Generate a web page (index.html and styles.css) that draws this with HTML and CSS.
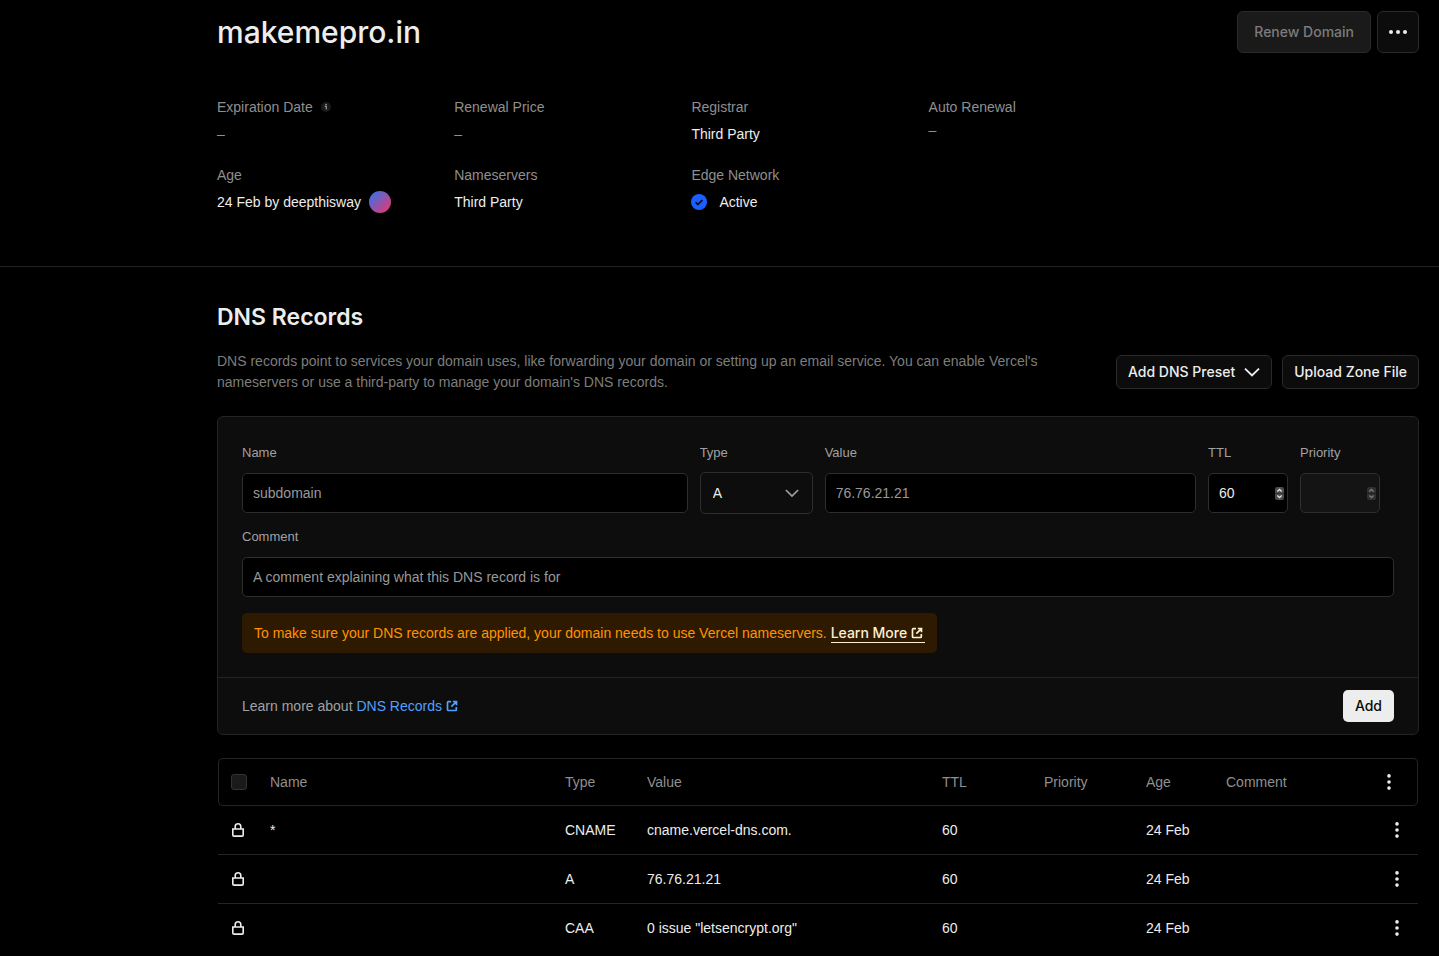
FILE: index.html
```html
<!DOCTYPE html>
<html lang="en">
<head>
<meta charset="utf-8">
<meta name="viewport" content="width=device-width, initial-scale=1">
<title>makemepro.in</title>
<link rel="stylesheet" href="styles.css">
</head>
<body>
<svg class="sprite" aria-hidden="true">
  <symbol id="chevron" viewBox="0 0 16 16"><path d="M1 4.6 8 11.4l7-6.8" fill="none" stroke="currentColor" stroke-width="1.9"/></symbol>
  <symbol id="external" viewBox="0 0 12 12"><path d="M5 1.7H2.3a.8.8 0 0 0-.8.8v7.2c0 .5.3.8.8.8h7.2c.5 0 .8-.3.8-.8V7M6.8 1.5h3.7v3.7M10.2 1.8 5.3 6.7" fill="none" stroke="currentColor" stroke-width="1.7"/></symbol>
  <symbol id="dots" viewBox="0 0 4 16"><circle cx="2" cy="1.9" r="1.8"/><circle cx="2" cy="8" r="1.8"/><circle cx="2" cy="14.1" r="1.8"/></symbol>
  <symbol id="lock" viewBox="0 0 14 14"><path d="M4.2 6V3.6a2.8 2.8 0 0 1 5.6 0V6M1.8 6h10.4v5.9a1.2 1.2 0 0 1-1.2 1.2H3a1.2 1.2 0 0 1-1.2-1.2z" fill="none" stroke="currentColor" stroke-width="1.6"/></symbol>
  <symbol id="stepper" viewBox="0 0 9 13"><rect width="9" height="13" rx="2" fill="#4c4c4c"/><path d="M0 6.5h9" stroke="#333" stroke-width="1"/><path d="M2.3 4.6 4.5 2.4l2.2 2.2M2.3 8.4l2.2 2.2 2.2-2.2" fill="none" stroke="#ddd" stroke-width="1.4"/></symbol>
</svg>

<header class="domain">
  <div class="domain-top">
    <h1>makemepro.in</h1>
    <div class="domain-actions">
      <button class="btn btn-large" disabled>Renew Domain</button>
      <button class="btn btn-square" aria-label="More options"><svg width="18" height="4" viewBox="0 0 18 4" fill="currentColor"><circle cx="2" cy="2" r="2"/><circle cx="9" cy="2" r="2"/><circle cx="16" cy="2" r="2"/></svg></button>
    </div>
  </div>
  <dl class="facts">
    <div class="fact"><dt>Expiration Date <svg class="info" width="10" height="10" viewBox="0 0 10 10"><circle cx="5" cy="5" r="5" fill="#1a1a1a"/><path d="M3.8 4.4h1.5v3.2" fill="none" stroke="#a1a1a1" stroke-width="1.1"/><circle cx="5" cy="2.6" r=".8" fill="#a1a1a1"/></svg></dt><dd class="empty">–</dd></div>
    <div class="fact"><dt>Renewal Price</dt><dd class="empty">–</dd></div>
    <div class="fact"><dt>Registrar</dt><dd>Third Party</dd></div>
    <div class="fact fact-tight"><dt>Auto Renewal</dt><dd class="empty">–</dd></div>
    <div class="fact fact-first"><dt>Age</dt><dd>24 Feb by deepthisway <span class="avatar"></span></dd></div>
    <div class="fact"><dt>Nameservers</dt><dd>Third Party</dd></div>
    <div class="fact"><dt>Edge Network</dt><dd class="active"><svg width="16" height="16" viewBox="0 0 16 16"><circle cx="8" cy="8" r="8" fill="#1a5fff"/><path d="m4.6 8.3 2.2 2.2 4.6-4.4" fill="none" stroke="#000" stroke-width="1.6"/></svg>Active</dd></div>
  </dl>
</header>

<main class="records">
  <h2>DNS Records</h2>
  <div class="intro">
    <p>DNS records point to services your domain uses, like forwarding your domain or setting up an email service. You can enable Vercel's nameservers or use a third-party to manage your domain's DNS records.</p>
    <div class="intro-actions">
      <button class="btn">Add DNS Preset <svg width="16" height="16"><use href="#chevron"/></svg></button>
      <button class="btn">Upload Zone File</button>
    </div>
  </div>

  <form class="card">
    <div class="card-body">
      <div class="fields">
        <div class="field"><label for="name">Name</label><input id="name" type="text" placeholder="subdomain"></div>
        <div class="field"><label for="type">Type</label><span class="select"><select id="type"><option>A</option><option>CNAME</option><option>CAA</option></select><svg class="select-icon" width="14" height="14"><use href="#chevron"/></svg></span></div>
        <div class="field"><label for="value">Value</label><input id="value" type="text" placeholder="76.76.21.21"></div>
        <div class="field"><label for="ttl">TTL</label><span class="number"><input id="ttl" type="number" value="60"><svg class="stepper" width="9" height="13"><use href="#stepper"/></svg></span></div>
        <div class="field"><label for="priority">Priority</label><span class="number number-off"><input id="priority" type="number" disabled><svg class="stepper" width="9" height="13"><use href="#stepper"/></svg></span></div>
      </div>
      <div class="field"><label for="comment">Comment</label><input id="comment" type="text" placeholder="A comment explaining what this DNS record is for"></div>
      <p class="warning">To make sure your DNS records are applied, your domain needs to use Vercel nameservers. <a href="#">Learn More <svg width="12" height="12"><use href="#external"/></svg></a></p>
    </div>
    <div class="card-foot">
      <p>Learn more about <a href="#">DNS Records <svg width="12" height="12"><use href="#external"/></svg></a></p>
      <button class="add" type="button">Add</button>
    </div>
  </form>

  <table class="table">
    <colgroup><col class="c-check"><col class="c-wide"><col class="c-type"><col class="c-wide"><col class="c-num"><col class="c-num"><col class="c-age"><col><col class="c-menu"></colgroup>
    <thead>
      <tr><th><input type="checkbox" aria-label="Select all records"></th><th>Name</th><th>Type</th><th>Value</th><th>TTL</th><th>Priority</th><th>Age</th><th>Comment</th><th class="menu"><button aria-label="Table options"><svg width="4" height="16"><use href="#dots"/></svg></button></th></tr>
    </thead>
    <tbody>
      <tr><td><svg class="lock" width="14" height="14"><use href="#lock"/></svg></td><td>*</td><td>CNAME</td><td>cname.vercel-dns.com.</td><td>60</td><td></td><td>24 Feb</td><td></td><td class="menu"><button aria-label="Record options"><svg width="4" height="16"><use href="#dots"/></svg></button></td></tr>
      <tr><td><svg class="lock" width="14" height="14"><use href="#lock"/></svg></td><td></td><td>A</td><td>76.76.21.21</td><td>60</td><td></td><td>24 Feb</td><td></td><td class="menu"><button aria-label="Record options"><svg width="4" height="16"><use href="#dots"/></svg></button></td></tr>
      <tr><td><svg class="lock" width="14" height="14"><use href="#lock"/></svg></td><td></td><td>CAA</td><td>0 issue "letsencrypt.org"</td><td>60</td><td></td><td>24 Feb</td><td></td><td class="menu"><button aria-label="Record options"><svg width="4" height="16"><use href="#dots"/></svg></button></td></tr>
    </tbody>
  </table>
</main>
</body>
</html>
```
FILE: styles.css
```css
* { box-sizing: border-box; }
body {
  margin: 0;
  background: #000;
  color: #ededed;
  font: 14px/20px "Liberation Sans", Arial, sans-serif;
}
h1, h2, p, dl, dd { margin: 0; }
button, input, select { font: inherit; color: inherit; }
button { cursor: pointer; }
.sprite { position: absolute; width: 0; height: 0; }

.domain, .records { padding-left: 217px; padding-right: 20px; }
.domain { padding-top: 11px; padding-bottom: 53px; border-bottom: 1px solid #222; }
.domain-top { display: flex; justify-content: space-between; align-items: center; }
h1, h2, .btn, .add, .warning a { font-family: Inter, "Liberation Sans", sans-serif; }
h1 { font-size: 30px; line-height: 40px; font-weight: 500; }
.domain-actions { display: flex; gap: 6px; }

.btn {
  display: inline-flex;
  align-items: center;
  justify-content: center;
  gap: 9px;
  height: 34px;
  padding: 0 11px;
  border: 1px solid #2a2a2a;
  border-radius: 6px;
  background: #0c0c0c;
  font-weight: 500;
  white-space: nowrap;
}
.btn-large { height: 42px; padding: 0 16px; }
.btn-square { width: 42px; height: 42px; padding: 0; }
.btn:disabled { background: #1a1a1a; color: #7c7c7c; cursor: default; }

.facts {
  display: grid;
  grid-template-columns: repeat(5, 1fr);
  row-gap: 20px;
  margin-top: 44px;
  padding-right: 16px;
}
.fact { display: grid; gap: 6px; align-content: start; }
.fact-tight { gap: 2px; }
.fact-first { grid-column: 1; }
dt { color: #8f8f8f; }
dd { display: flex; align-items: center; height: 22px; }
.info { margin-left: 4px; }
.empty { color: #8f8f8f; }
.avatar {
  width: 22px;
  height: 22px;
  margin-left: 8px;
  border-radius: 50%;
  background: linear-gradient(135deg, #3b6fe8 10%, #e03a72 90%);
}
.active { gap: 12px; }

.records { padding-top: 34px; }
h2 { font-size: 23px; line-height: 32px; font-weight: 600; }
.intro {
  display: flex;
  justify-content: space-between;
  align-items: center;
  gap: 40px;
  margin-top: 18px;
  color: #7d7d7d;
}
.intro p { max-width: 856px; line-height: 21px; }
.intro-actions { display: flex; gap: 10px; color: #ededed; flex: none; }

.card {
  margin-top: 23px;
  border: 1px solid #242424;
  border-radius: 6px;
  background: #0d0d0d;
}
.card-body { display: grid; gap: 12px; padding: 24px; }
.fields {
  display: grid;
  grid-template-columns: 6fr 113px 5fr 80px 80px;
  gap: 12px;
  padding-right: 14px;
}
.field { display: grid; gap: 8px; align-content: start; min-width: 0; }
.field label { color: #a1a1a1; font-size: 13px; line-height: 24px; }
.field input, .field select {
  width: 100%;
  height: 40px;
  padding: 0 10px;
  border: 1px solid #2e2e2e;
  border-radius: 5px;
  background: #000;
  appearance: none;
}
.field input::placeholder { color: #999; opacity: 1; }
.field select { height: 42px; padding: 0 12px; background: #0d0d0d; }
.select, .number { position: relative; display: block; }
.select { margin: -1px 0; }
.select-icon { position: absolute; right: 14px; top: 14px; color: #a1a1a1; pointer-events: none; }
.stepper { position: absolute; right: 4px; top: 14px; pointer-events: none; }
.number input { appearance: textfield; }
.number input:disabled { background: #141414; }
.number-off .stepper { opacity: .5; }

.warning {
  justify-self: start;
  margin-top: 4px;
  padding: 10px 12px;
  border-radius: 5px;
  background: #2e1a00;
  color: #ff9300;
}
.warning a {
  padding: 0 2px 1px 0;
  border-bottom: 1px solid #ffeed0;
  color: #ffeed0;
  font-weight: 500;
  text-decoration: none;
}
a svg { vertical-align: -1px; }
.card-foot {
  display: flex;
  justify-content: space-between;
  align-items: center;
  padding: 12px 24px;
  border-top: 1px solid #242424;
  color: #a1a1a1;
}
.card-foot a { color: #52a0ff; text-decoration: none; }
.add {
  height: 32px;
  padding: 0 12px;
  border: 0;
  border-radius: 5px;
  background: #ededed;
  color: #0a0a0a;
  font-weight: 500;
}

.table {
  width: calc(100% - 2px);
  margin: 23px 1px 0;
  border-collapse: separate;
  border-spacing: 0;
  table-layout: fixed;
}
.c-check { width: 40px; }
.c-wide { width: 295px; }
.c-type { width: 82px; }
.c-num { width: 102px; }
.c-age { width: 80px; }
.c-menu { width: 42px; }
th, td { height: 48px; padding: 0 0 0 12px; text-align: left; }
th {
  border: solid #242424;
  border-width: 1px 0;
  color: #8f8f8f;
  font-weight: 400;
}
th:first-child { border-left-width: 1px; border-radius: 5px 0 0 5px; }
th:last-child { border-right-width: 1px; border-radius: 0 5px 5px 0; }
tbody tr + tr td { height: 49px; border-top: 1px solid #242424; }
.table input {
  display: block;
  width: 16px;
  height: 16px;
  margin: 0;
  border: 1px solid #333;
  border-radius: 3px;
  background: #1a1a1a;
  appearance: none;
}
.lock { display: block; margin-left: 1px; }
.table .menu { padding: 0 19px 0 0; }
.table th.menu { padding-right: 26px; }
.menu button {
  display: block;
  width: 4px;
  height: 16px;
  margin-left: auto;
  padding: 0;
  border: 0;
  background: none;
  color: #ededed;
}
.menu svg { display: block; fill: currentColor; }
```
